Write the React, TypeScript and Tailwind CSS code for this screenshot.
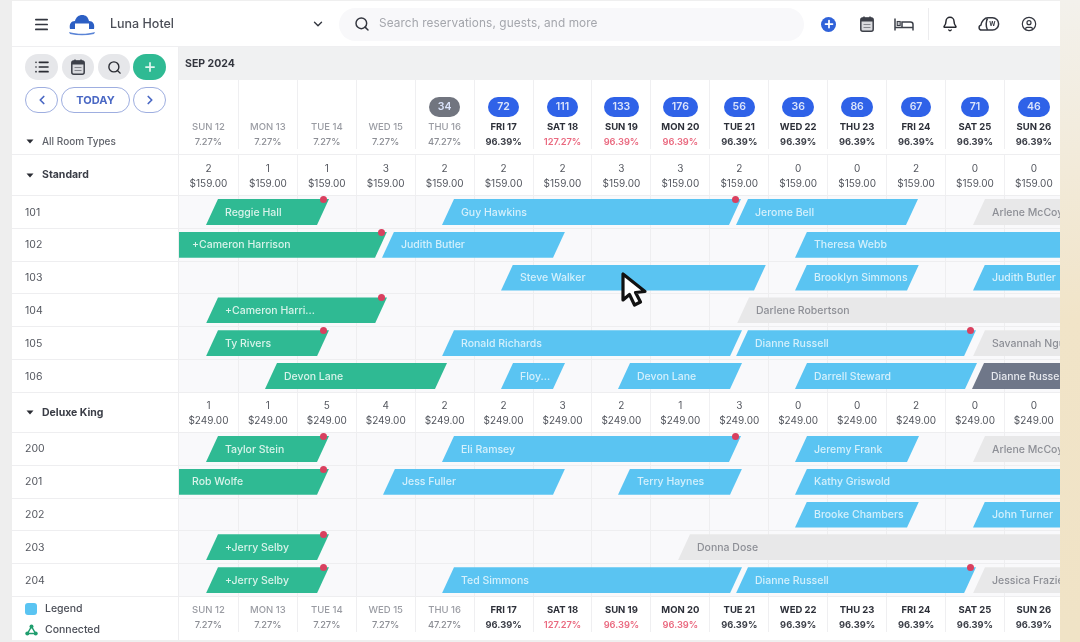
import { Bell, ChevronDown, ChevronLeft, ChevronRight, CircleUser, List, Menu, Plus, Search } from 'lucide-react';

type Tone = 'green' | 'blue' | 'gray' | 'slate';

interface BarData {
  from: number;
  to: number;
  label: string;
  tone: Tone;
  dot?: boolean;
  flat?: boolean;
}

const toneClass: Record<Tone, string> = {
  green: 'bg-[#2fba93] text-[#d8f3ea]',
  blue: 'bg-[#5ac4f2] text-[#d4f0fc]',
  gray: 'bg-[#e8e8e9] text-[#8d8f96]',
  slate: 'bg-[#6f7789] text-[#e6e8ee]',
};

const days = [
  { d: 'SUN 12', p: '7.27%' },
  { d: 'MON 13', p: '7.27%' },
  { d: 'TUE 14', p: '7.27%' },
  { d: 'WED 15', p: '7.27%' },
  { d: 'THU 16', p: '47.27%', badge: '34', grayBadge: true },
  { d: 'FRI 17', p: '96.39%', badge: '72', active: true },
  { d: 'SAT 18', p: '127.27%', badge: '111', active: true, red: true },
  { d: 'SUN 19', p: '96.39%', badge: '133', active: true, red: true },
  { d: 'MON 20', p: '96.39%', badge: '176', active: true, red: true },
  { d: 'TUE 21', p: '96.39%', badge: '56', active: true },
  { d: 'WED 22', p: '96.39%', badge: '36', active: true },
  { d: 'THU 23', p: '96.39%', badge: '86', active: true },
  { d: 'FRI 24', p: '96.39%', badge: '67', active: true },
  { d: 'SAT 25', p: '96.39%', badge: '71', active: true },
  { d: 'SUN 26', p: '96.39%', badge: '46', active: true },
];

const standard = [2, 1, 1, 3, 2, 2, 2, 3, 3, 2, 0, 0, 2, 0, 0];
const deluxe = [1, 1, 5, 4, 2, 2, 3, 2, 1, 3, 0, 0, 2, 0, 0];

const standardRows: { room: string; bars: BarData[] }[] = [
  {
    room: '101',
    bars: [
      { from: 206, to: 329, label: 'Reggie Hall', tone: 'green', dot: true },
      { from: 442, to: 741, label: 'Guy Hawkins', tone: 'blue', dot: true },
      { from: 736, to: 918, label: 'Jerome Bell', tone: 'blue' },
      { from: 973, to: 1100, label: 'Arlene McCoy', tone: 'gray' },
    ],
  },
  {
    room: '102',
    bars: [
      { from: 179, to: 387, label: '+Cameron Harrison', tone: 'green', dot: true, flat: true },
      { from: 382, to: 565, label: 'Judith Butler', tone: 'blue' },
      { from: 795, to: 1100, label: 'Theresa Webb', tone: 'blue' },
    ],
  },
  {
    room: '103',
    bars: [
      { from: 501, to: 766, label: 'Steve Walker', tone: 'blue' },
      { from: 795, to: 919, label: 'Brooklyn Simmons', tone: 'blue' },
      { from: 973, to: 1100, label: 'Judith Butler', tone: 'blue' },
    ],
  },
  {
    room: '104',
    bars: [
      { from: 206, to: 387, label: '+Cameron Harri...', tone: 'green', dot: true },
      { from: 737, to: 1100, label: 'Darlene Robertson', tone: 'gray' },
    ],
  },
  {
    room: '105',
    bars: [
      { from: 206, to: 329, label: 'Ty Rivers', tone: 'green', dot: true },
      { from: 442, to: 742, label: 'Ronald Richards', tone: 'blue' },
      { from: 736, to: 976, label: 'Dianne Russell', tone: 'blue', dot: true },
      { from: 973, to: 1100, label: 'Savannah Nguyen', tone: 'gray' },
    ],
  },
  {
    room: '106',
    bars: [
      { from: 265, to: 447, label: 'Devon Lane', tone: 'green' },
      { from: 501, to: 565, label: 'Floy...', tone: 'blue' },
      { from: 618, to: 742, label: 'Devon Lane', tone: 'blue' },
      { from: 795, to: 977, label: 'Darrell Steward', tone: 'blue' },
      { from: 972, to: 1100, label: 'Dianne Russell', tone: 'slate' },
    ],
  },
];

const deluxeRows: { room: string; bars: BarData[] }[] = [
  {
    room: '200',
    bars: [
      { from: 206, to: 329, label: 'Taylor Stein', tone: 'green', dot: true },
      { from: 442, to: 741, label: 'Eli Ramsey', tone: 'blue', dot: true },
      { from: 795, to: 919, label: 'Jeremy Frank', tone: 'blue' },
      { from: 973, to: 1100, label: 'Arlene McCoy', tone: 'gray' },
    ],
  },
  {
    room: '201',
    bars: [
      { from: 179, to: 329, label: 'Rob Wolfe', tone: 'green', dot: true, flat: true },
      { from: 383, to: 565, label: 'Jess Fuller', tone: 'blue' },
      { from: 618, to: 742, label: 'Terry Haynes', tone: 'blue' },
      { from: 795, to: 1100, label: 'Kathy Griswold', tone: 'blue' },
    ],
  },
  {
    room: '202',
    bars: [
      { from: 795, to: 919, label: 'Brooke Chambers', tone: 'blue' },
      { from: 973, to: 1100, label: 'John Turner', tone: 'blue' },
    ],
  },
  {
    room: '203',
    bars: [
      { from: 206, to: 329, label: '+Jerry Selby', tone: 'green', dot: true },
      { from: 678, to: 1100, label: 'Donna Dose', tone: 'gray' },
    ],
  },
  {
    room: '204',
    bars: [
      { from: 206, to: 329, label: '+Jerry Selby', tone: 'green', dot: true },
      { from: 442, to: 742, label: 'Ted Simmons', tone: 'blue' },
      { from: 736, to: 976, label: 'Dianne Russell', tone: 'blue', dot: true },
      { from: 973, to: 1100, label: 'Jessica Frazier', tone: 'gray' },
    ],
  },
];

function Caret() {
  return (
    <svg width="8" height="5" viewBox="0 0 8 5" className="shrink-0">
      <path d="M0.5 0.5h7L4 4.5z" fill="#2a2c33" />
    </svg>
  );
}

function Logo() {
  return (
    <svg width="28" height="24" viewBox="0 0 28 24">
      <path d="M2 17c-1-5 1-8 5-8 1-4 4-6 7-6 4 0 6 2 7 6 4 0 6 3 5 8z" fill="#2c5fc4" />
      <path d="M7 11.5h14v5.5H7z" fill="#fff" />
      <path d="M1 20c8 2.4 18 2.4 26 0l-1 2c-8 1.6-16 1.6-24 0z" fill="#5a84d6" />
    </svg>
  );
}

function CalendarIcon() {
  return (
    <svg width="14" height="16" viewBox="0 0 14 16">
      <rect x="0.8" y="2" width="12.4" height="13.200" rx="2" fill="#d9dade" stroke="#3d4049" strokeWidth="1.500" />
      <path d="M1 2.800a1 1 0 0 1 1-1h10a1 1 0 0 1 1 1v2.700H1z" fill="#3d4049" />
      <path d="M4 0.500v3M10 0.500v3" stroke="#3d4049" strokeWidth="1.500" />
      <path d="M3.500 8.500h7M3.500 11.500h7" stroke="#85878e" strokeWidth="1.200" />
    </svg>
  );
}

function BedIcon() {
  return (
    <svg width="20" height="13" viewBox="0 0 20 13" fill="none" stroke="#3d4049" strokeWidth="1.500">
      <path d="M1 0.500v12M1 9.500h18M19 12.500V6.500a2.500 2.500 0 0 0-2.500-2.500H8v5.500" />
      <rect x="3.200" y="3.500" width="3" height="4" fill="#c9cbd0" strokeWidth="1.100" />
    </svg>
  );
}

function CloudW() {
  return (
    <svg width="22" height="16" viewBox="0 0 22 16" fill="none" stroke="#33363f" strokeWidth="1.500">
      <path d="M6 14H3.500a2.500 2.500 0 0 1-.6-4.900C3.600 5 6.500 1.800 10 1.800h4.500a6.100 6.100 0 0 1 0 12.200z" />
      <path d="M9.500 2.500C8 5 7.500 10 9.500 14" />
      <text x="11.200" y="10.300" fontSize="6" fontWeight="700" fill="#33363f" stroke="none" fontFamily="Inter, sans-serif">
        W
      </text>
    </svg>
  );
}

function TopBar() {
  return (
    <div className="flex h-[47px] items-center border-t border-b border-t-[#efefef] border-b-[#efeff1] bg-white pt-[1px]">
      <Menu className="ml-[21px] h-[17px] w-[17px] text-[#33363f]" strokeWidth={2.4} />
      <div className="ml-[18px]">
        <Logo />
      </div>
      <span className="ml-[14px] w-[201px] text-[12.500px] font-medium text-[#4b4e57]">Luna Hotel</span>
      <ChevronDown className="h-3.5 w-3.5 text-[#33363f]" strokeWidth={2.4} />
      <div className="ml-[14px] flex h-[33px] w-[465px] items-center rounded-full bg-[#f8f8fa] pl-[15px]">
        <Search className="h-4 w-4 text-[#33363f]" strokeWidth={2.2} />
        <span className="ml-[9px] text-[11.800px] tracking-[0.1px] text-[#a4a6ac]">Search reservations, guests, and more</span>
      </div>
      <div className="ml-[17px] flex h-[15px] w-[15px] items-center justify-center rounded-full bg-[#2f62d9]">
        <Plus className="h-3 w-3 text-white" strokeWidth={3.5} />
      </div>
      <div className="ml-[24px]">
        <CalendarIcon />
      </div>
      <div className="ml-[20px]">
        <BedIcon />
      </div>
      <div className="ml-[14px] h-[32px] w-px bg-[#ececee]" />
      <Bell className="ml-[13px] h-[16px] w-[16px] text-[#25272e]" strokeWidth={2.2} />
      <div className="ml-[20px]">
        <CloudW />
      </div>
      <CircleUser className="ml-[21px] h-[16px] w-[16px] text-[#33363f]" strokeWidth={1.8} />
    </div>
  );
}

function Toolbar() {
  return (
    <div className="flex h-[108px] w-[167px] shrink-0 flex-col border-r border-b border-[#eeeef0] bg-white pl-[13px]">
      <div className="mt-[7px] flex gap-[4px]">
        <div className="flex h-[26px] w-[33px] items-center justify-center rounded-full bg-[#e6e7ea]">
          <List className="h-4 w-4 text-[#2a2c33]" strokeWidth={2.5} />
        </div>
        <div className="flex h-[26px] w-[32px] items-center justify-center rounded-full bg-[#e6e7ea]">
          <CalendarIcon />
        </div>
        <div className="flex h-[26px] w-[32px] items-center justify-center rounded-full bg-[#e6e7ea]">
          <Search className="h-[15px] w-[15px] text-[#2a2c33]" strokeWidth={2.2} />
        </div>
        <div className="-ml-px flex h-[26px] w-[33px] items-center justify-center rounded-full bg-[#2fba93]">
          <Plus className="h-3.5 w-3.5 text-[#dff5ee]" strokeWidth={3} />
        </div>
      </div>
      <div className="mt-[7px] flex gap-[3px]">
        <div className="flex h-[26px] w-[33px] items-center justify-center rounded-full border border-[#9eaee0]">
          <ChevronLeft className="h-3.5 w-3.5 text-[#4a68c4]" strokeWidth={3} />
        </div>
        <div className="flex h-[26px] w-[69px] items-center justify-center rounded-full border border-[#9eaee0] text-[11px] font-bold text-[#4a68c4]">
          TODAY
        </div>
        <div className="flex h-[26px] w-[33px] items-center justify-center rounded-full border border-[#9eaee0]">
          <ChevronRight className="h-3.5 w-3.5 text-[#4a68c4]" strokeWidth={3} />
        </div>
      </div>
      <div className="mt-[21px] flex items-center gap-[8px] pl-[1px] text-[10px] font-medium text-[#60636b]">
        <Caret />
        All Room Types
      </div>
    </div>
  );
}

function DayCell({ day, tall }: { day: (typeof days)[number]; tall?: boolean }) {
  const dateColor = day.active ? 'text-[#2d3039] font-bold' : 'text-[#9a9ca3] font-medium';
  const pctColor = day.red ? 'text-[#ea6a80] font-semibold' : day.active ? 'text-[#3b3e47] font-bold' : 'text-[#8c8e95] font-medium';
  return (
    <div className="flex flex-col items-center justify-end border-l border-[#efeff1] first:border-l-0">
      {tall && day.badge && (
        <span
          className={`mb-[2px] flex h-[20px] items-center justify-center rounded-full px-[9px] text-[10.500px] font-semibold text-[#dbe4fb] ${
            day.grayBadge ? 'bg-[#71757f]' : 'bg-[#2f62e8]'
          }`}
        >
          {day.badge}
        </span>
      )}
      <span className={`text-[9.500px] leading-[15px] ${dateColor}`}>{day.d}</span>
      <span className={`text-[9.300px] leading-[15px] ${pctColor}`}>{day.p}</span>
    </div>
  );
}

function DayHeader() {
  return (
    <div className="flex h-[108px] min-w-0 flex-1 flex-col">
      <div className="flex h-[33px] items-center bg-[#f0f1f2] pl-[6px] text-[10.500px] font-bold text-[#33363f]">SEP 2024</div>
      <div className="grid h-[75px] grid-cols-[repeat(15,58.930px)] border-b border-[#eeeef0] bg-white pb-[5px]">
        {days.map((day) => (
          <DayCell key={day.d} day={day} tall />
        ))}
      </div>
    </div>
  );
}

function SummaryRow({ name, counts, price, height }: { name: string; counts: number[]; price: string; height: string }) {
  return (
    <div className={`flex border-b border-[#eeeef0] bg-white ${height}`}>
      <div className="flex w-[167px] shrink-0 items-center gap-[8px] border-r border-[#eeeef0] pl-[14px] text-[10.500px] font-bold text-[#3a3d46]">
        <Caret />
        {name}
      </div>
      <div className="grid min-w-0 flex-1 grid-cols-[repeat(15,58.930px)]">
        {counts.map((count, i) => (
          <div
            key={i}
            className="flex flex-col items-center justify-center border-l border-[#f0f0f2] pt-[1px] text-[10px] leading-[15px] text-[#54575f] first:border-l-0"
          >
            <span>{count}</span>
            <span>{price}</span>
          </div>
        ))}
      </div>
    </div>
  );
}

function Bar({ bar }: { bar: BarData }) {
  const left = bar.from - 179;
  const width = bar.to - bar.from;
  return (
    <>
      <div
        className={`absolute top-[3px] flex h-[26px] items-center overflow-hidden whitespace-nowrap pt-[1px] text-[10.500px] font-medium ${toneClass[bar.tone]} ${
          bar.flat
            ? 'pl-[13px] [clip-path:polygon(0_0,100%_0,calc(100%-12px)_100%,0_100%)]'
            : 'pl-[19px] [clip-path:polygon(12px_0,100%_0,calc(100%-12px)_100%,0_100%)]'
        }`}
        style={{ left, width }}
      >
        {bar.label}
      </div>
      {bar.dot && (
        <span className="absolute top-[0px] h-[7px] w-[7px] rounded-full bg-[#d9405f]" style={{ left: left + width - 9 }} />
      )}
    </>
  );
}

function RoomRow({ room, bars }: { room: string; bars: BarData[] }) {
  return (
    <div className="flex h-[32.800px] border-b border-[#eeeef0]">
      <div className="flex w-[167px] shrink-0 items-center border-r border-[#eeeef0] bg-white pt-[1px] pl-[13px] text-[10.500px] text-[#54575f]">
        {room}
      </div>
      <div className="relative min-w-0 flex-1 overflow-hidden bg-[#f9f9fb]">
        <div className="grid h-full grid-cols-[repeat(15,58.930px)]">
          {days.map((day) => (
            <div key={day.d} className="border-l border-[#eeeef0] first:border-l-0" />
          ))}
        </div>
        {bars.map((bar) => (
          <Bar key={bar.label + bar.from} bar={bar} />
        ))}
      </div>
    </div>
  );
}

function Footer() {
  return (
    <div className="flex h-[43px] bg-white">
      <div className="flex w-[167px] shrink-0 flex-col justify-center gap-[6px] border-r border-[#eeeef0] pt-[2px] pl-[13px] text-[10.500px] font-medium text-[#4b4e57]">
        <div className="flex items-center gap-[8px]">
          <span className="h-[12px] w-[12px] rounded-[3px] bg-[#5ac4f2]" />
          Legend
        </div>
        <div className="flex items-center gap-[7px]">
          <svg width="13" height="12" viewBox="0 0 13 12" fill="none" stroke="#1f9d6e" strokeWidth="1.500">
            <path d="M6.500 2.500 2.500 9.500h8z" />
            <circle cx="6.500" cy="2.500" r="2" fill="#1f9d6e" stroke="none" />
            <circle cx="2.300" cy="9.500" r="2" fill="#1f9d6e" stroke="none" />
            <circle cx="10.700" cy="9.500" r="2" fill="#1f9d6e" stroke="none" />
          </svg>
          Connected
        </div>
      </div>
      <div className="grid min-w-0 flex-1 grid-cols-[repeat(15,58.930px)] pb-[8px]">
        {days.map((day) => (
          <DayCell key={day.d} day={day} />
        ))}
      </div>
    </div>
  );
}

export default function App() {
  return (
    <div className="relative h-[642px] w-[1080px] overflow-hidden bg-[#efefef] font-['Inter',sans-serif] blur-[0.5px]">
      <div className="flex h-full">
        <div className="w-[12px] shrink-0 bg-[#eeeeee]" />
        <div className="h-[640px] w-[1048px] shrink-0 overflow-hidden bg-white">
          <TopBar />
          <div className="flex">
            <Toolbar />
            <DayHeader />
          </div>
          <SummaryRow name="Standard" counts={standard} price="$159.00" height="h-[41px]" />
          {standardRows.map((row) => (
            <RoomRow key={row.room} room={row.room} bars={row.bars} />
          ))}
          <SummaryRow name="Deluxe King" counts={deluxe} price="$249.00" height="h-[40.200px]" />
          {deluxeRows.map((row) => (
            <RoomRow key={row.room} room={row.room} bars={row.bars} />
          ))}
          <Footer />
        </div>
        <div className="w-[20px] shrink-0 bg-gradient-to-b from-[#f3f1ec] via-[#f1e4c8] to-[#f0e3c6]" />
      </div>
      {/* mouse pointer from the recording */}
      <svg className="absolute left-[618px] top-[269px]" width="32" height="40" viewBox="0 0 32 40">
        <path
          d="M5 5 5 31 11.500 25.500 16.500 36 22.500 33 17.500 23.500 27 22.500z"
          fill="#fff"
          stroke="#111"
          strokeWidth="3.200"
          strokeLinejoin="round"
        />
      </svg>
    </div>
  );
}
